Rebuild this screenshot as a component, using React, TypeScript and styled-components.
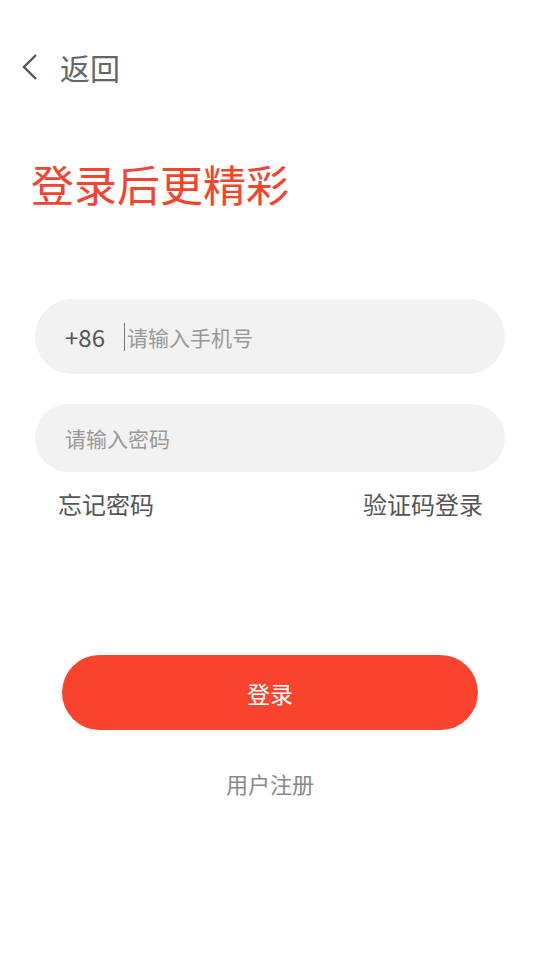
import { createGlobalStyle } from 'styled-components';
import styled from 'styled-components';

const GlobalStyle = createGlobalStyle`
  body {
    margin: 0;
    background: #ffffff;
    font-family: 'Noto Sans CJK SC', 'Noto Sans', sans-serif;
  }
`;

const Page = styled.div`
  width: 540px;
  height: 960px;
  background: #ffffff;
  display: flex;
  flex-direction: column;
`;

const TopBar = styled.div`
  display: flex;
  align-items: center;
  height: 40px;
  margin-top: 47px;
  padding-left: 20px;
  gap: 20px;
`;

const BackText = styled.span`
  font-size: 30px;
  color: #666666;
  line-height: 40px;
`;

const Title = styled.h1`
  margin: 68px 0 0 31px;
  font-size: 43px;
  font-weight: 400;
  line-height: 56px;
  color: #f4432f;
`;

const Form = styled.div`
  display: flex;
  flex-direction: column;
  padding: 0 35px;
  margin-top: 88px;
`;

const Field = styled.div<{ $height: number; $gap?: number }>`
  display: flex;
  align-items: center;
  height: ${(p) => p.$height}px;
  margin-top: ${(p) => p.$gap ?? 0}px;
  border-radius: 40px;
  background: #f2f2f2;
  padding-left: 30px;
`;

const Prefix = styled.span`
  font-size: 24px;
  color: #555555;
  margin-right: 19px;
`;

const Cursor = styled.span`
  width: 1px;
  height: 28px;
  background: #777777;
  margin-right: 2px;
`;

const Placeholder = styled.span`
  font-size: 21px;
  color: #999999;
`;

const Links = styled.div`
  display: flex;
  justify-content: space-between;
  padding: 0 22px 0 23px;
  margin-top: 14px;
`;

const LinkText = styled.span`
  font-size: 24px;
  color: #555555;
  line-height: 36px;
`;

const LoginButton = styled.button`
  margin: 133px 62px 0;
  height: 75px;
  border: none;
  border-radius: 38px;
  background: #f8432f;
  color: #ffffff;
  font-family: inherit;
  font-size: 23px;
`;

const Register = styled.div`
  margin-top: 35px;
  text-align: center;
  font-size: 22px;
  color: #888888;
  line-height: 36px;
`;

const BackIcon = () => (
  <svg width="20" height="30" viewBox="0 0 20 30">
    <path d="M16 3 L4 15 L16 27" fill="none" stroke="#555555" strokeWidth="2.4" />
  </svg>
);

export default function App() {
  return (
    <Page>
      <GlobalStyle />
      <TopBar>
        <BackIcon />
        <BackText>返回</BackText>
      </TopBar>
      <Title>登录后更精彩</Title>
      <Form>
        <Field $height={75}>
          <Prefix>+86</Prefix>
          <Cursor />
          <Placeholder>请输入手机号</Placeholder>
        </Field>
        <Field $height={68} $gap={30}>
          <Placeholder>请输入密码</Placeholder>
        </Field>
        <Links>
          <LinkText>忘记密码</LinkText>
          <LinkText>验证码登录</LinkText>
        </Links>
      </Form>
      <LoginButton>登录</LoginButton>
      <Register>用户注册</Register>
    </Page>
  );
}
